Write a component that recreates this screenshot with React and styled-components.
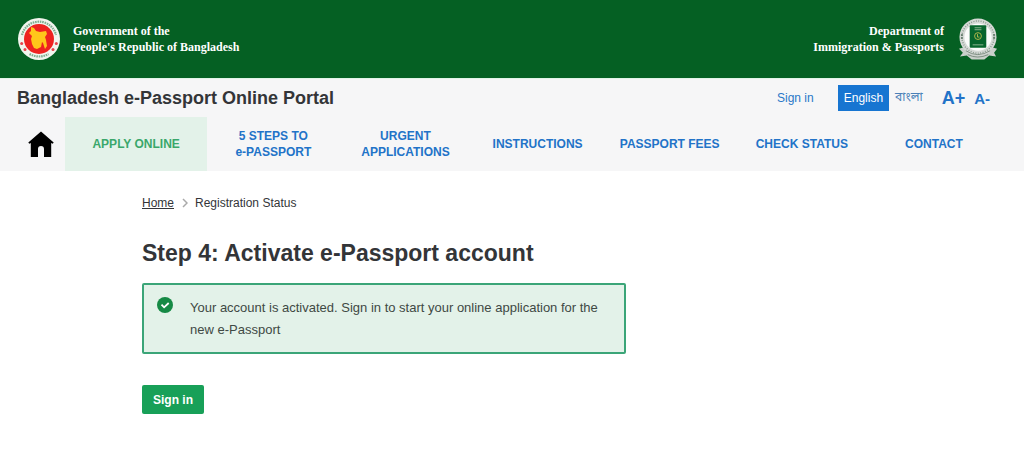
import styled, { createGlobalStyle } from 'styled-components';

const GlobalStyle = createGlobalStyle`
  *, *::before, *::after {
    box-sizing: border-box;
  }
  body {
    margin: 0;
    background: #fff;
    color: #333538;
    font-family: 'Liberation Sans', Arial, sans-serif;
    font-size: 12px;
  }
  h1, h2, p, ol {
    margin: 0;
    padding: 0;
  }
`;

const TopBar = styled.div`
  display: flex;
  justify-content: space-between;
  align-items: center;
  height: 78px;
  padding: 0 26px 0 17px;
  background: #056023;
`;

const Authority = styled.div`
  display: flex;
  align-items: center;
  gap: ${(p) => (p.$end ? '14px' : '12px')};
  color: #fff;
  font: bold 12px/16px 'Liberation Serif', 'Times New Roman', serif;
  text-align: ${(p) => (p.$end ? 'right' : 'left')};
  svg {
    display: block;
    flex: none;
  }
`;

const Header = styled.header`
  background: #f6f6f7;
`;

const PortalRow = styled.div`
  display: flex;
  justify-content: space-between;
  align-items: center;
  height: 39px;
  padding: 0 34px 0 17px;
  border-top: 1px solid #e2f5e8;
`;

const PortalTitle = styled.h1`
  font-size: 18px;
  line-height: 24px;
`;

const Tools = styled.div`
  display: flex;
  align-items: center;
`;

const SignInLink = styled.a`
  margin-right: 24px;
  color: #2a78c8;
  text-decoration: none;
`;

const Language = styled.button`
  height: 26px;
  padding: 0 6px;
  border: 0;
  background: ${(p) => (p.$active ? '#1775d1' : 'transparent')};
  color: ${(p) => (p.$active ? '#fff' : '#4a80b8')};
  font: 12px 'Liberation Sans', 'Noto Sans Bengali', 'Noto Sans', sans-serif;
`;

const FontSize = styled.button`
  margin-left: ${(p) => (p.$large ? '13px' : '9px')};
  padding: 0;
  border: 0;
  background: none;
  color: #2273c8;
  font: bold ${(p) => (p.$large ? '18px' : '15px')} 'Liberation Sans', Arial, sans-serif;
`;

const Nav = styled.nav`
  display: grid;
  grid-template-columns: 48px 14fr repeat(6, 13fr);
  height: 54px;
  padding: 0 24px 0 17px;
`;

const NavItem = styled.a`
  display: flex;
  align-items: center;
  justify-content: center;
  background: ${(p) => (p.$active ? '#e3f2e9' : 'transparent')};
  color: ${(p) => (p.$active ? '#3aa76b' : '#2273c8')};
  font-weight: bold;
  line-height: 16px;
  text-align: center;
  text-decoration: none;
  white-space: pre-line;
`;

const Main = styled.main`
  max-width: 740px;
  margin: 0 auto;
  padding: 24px 0 48px;
`;

const Breadcrumb = styled.ol`
  display: flex;
  align-items: center;
  gap: 8px;
  list-style: none;
  line-height: 16px;
  li {
    display: flex;
    align-items: center;
    gap: 7px;
  }
  a {
    color: inherit;
  }
`;

const StepTitle = styled.h2`
  margin-top: 26px;
  font-size: 23px;
  line-height: 32px;
`;

const Alert = styled.div`
  display: flex;
  align-items: flex-start;
  gap: 17px;
  max-width: 484px;
  margin-top: 14px;
  padding: 12px 24px 11px 13px;
  border: 2px solid #3ba578;
  border-radius: 2px;
  background: #e3f2e9;
  color: #404944;
  font-size: 13px;
  line-height: 22px;
  svg {
    flex: none;
  }
`;

const SignInButton = styled.button`
  height: 29px;
  margin-top: 31px;
  padding: 0 11px;
  border: 0;
  border-radius: 2px;
  background: #18a058;
  color: #fff;
  font: bold 12px 'Liberation Sans', Arial, sans-serif;
`;

function GovernmentSeal() {
  return (
    <svg width="44" height="44" viewBox="0 0 44 44" aria-hidden="true">
      <circle cx="22" cy="22" r="21" fill="#f2f5ee" />
      <path
        d="M5 18a17.500 17.500 0 0 1 34 0M12.500 37q9.500 5 19 0"
        fill="none"
        stroke="#7fae90"
        strokeWidth="2.200"
        strokeDasharray="1.600 .8"
      />
      <circle cx="22" cy="22" r="15" fill="#ee2220" />
      <g fill="#e8424a">
        <circle cx="4.700" cy="26.500" r="1.500" />
        <circle cx="8" cy="32.500" r="1.500" />
        <circle cx="36" cy="32.500" r="1.500" />
        <circle cx="39.300" cy="26.500" r="1.500" />
      </g>
      <path
        fill="#ffc61a"
        d="M14 10l3 1 2 3 4 1 6-1 1 3-2 3 1 3 1 6-2 3-2-6-1-1-1 5-4 2-3-1-2-4-1-5 1-3-3-3 2-2z"
      />
    </svg>
  );
}

function PassportSeal() {
  return (
    <svg width="40" height="44" viewBox="0 0 41 44" aria-hidden="true">
      <path fill="#c9cfca" d="M1 32l7-2 12 7 13-7 7 2-3 4 2 4-7-1-5 4H14l-5-4-7 1 3-4z" />
      <circle cx="20.500" cy="20" r="19" fill="#d5d9d6" />
      <circle cx="20.500" cy="20" r="16.500" fill="none" stroke="#8b9b90" strokeWidth="1.500" strokeDasharray="1 1.500" />
      <circle cx="20.500" cy="20" r="14" fill="#fbfcfb" />
      <path d="M8 34q12 8 25 0M10 38q10 5 21 0" fill="none" stroke="#7c8d81" />
      <rect x="12" y="8" width="17" height="23" rx="1" fill="#07652d" />
      <path d="M17 10.500h7M17 12.500h7M15 28h11" stroke="#8bb38f" />
      <circle cx="20.500" cy="19" r="3.500" fill="none" stroke="#b0b64b" />
      <path d="M20 17v3h2" fill="none" stroke="#b0b64b" />
      <path d="M3 18h2M3 21h2M36 18h2M36 21h2" stroke="#566f5e" strokeWidth="1.500" />
    </svg>
  );
}

function HomeIcon() {
  return (
    <svg width="26" height="26" viewBox="0 0 26 26" aria-hidden="true">
      <path d="M13 .5L.3 11.600l1 1.200 1.500-.8v14H10v-8q0-3 3-3t3 3v8h7.200V12l1.500.8 1-1.200z" />
    </svg>
  );
}

function CheckIcon() {
  return (
    <svg width="16" height="16" viewBox="0 0 16 16" aria-hidden="true">
      <circle cx="8" cy="8" r="8" fill="#168a45" />
      <path d="M4.500 7.700l2.600 2.600 4.600-4.300" fill="none" stroke="#fff" strokeWidth="1.800" />
    </svg>
  );
}

const links = [
  'APPLY ONLINE',
  '5 STEPS TO\ne-PASSPORT',
  'URGENT\nAPPLICATIONS',
  'INSTRUCTIONS',
  'PASSPORT FEES',
  'CHECK STATUS',
  'CONTACT',
];

export default function App() {
  return (
    <>
      <GlobalStyle />
      <TopBar>
        <Authority>
          <GovernmentSeal />
          <p>
            Government of the
            <br />
            People's Republic of Bangladesh
          </p>
        </Authority>
        <Authority $end>
          <p>
            Department of
            <br />
            Immigration &amp; Passports
          </p>
          <PassportSeal />
        </Authority>
      </TopBar>
      <Header>
        <PortalRow>
          <PortalTitle>Bangladesh e-Passport Online Portal</PortalTitle>
          <Tools>
            <SignInLink href="#signin">Sign in</SignInLink>
            <Language type="button" $active>
              English
            </Language>
            <Language type="button" lang="bn">
              বাংলা
            </Language>
            <FontSize type="button" $large>
              A+
            </FontSize>
            <FontSize type="button">A-</FontSize>
          </Tools>
        </PortalRow>
        <Nav>
          <NavItem href="#home" aria-label="Home">
            <HomeIcon />
          </NavItem>
          {links.map((label, i) => (
            <NavItem key={label} href="#" $active={i === 0}>
              {label}
            </NavItem>
          ))}
        </Nav>
      </Header>
      <Main>
        <Breadcrumb>
          <li>
            <a href="#home">Home</a>
          </li>
          <li>
            <svg width="6" height="10" viewBox="0 0 6 10" aria-hidden="true">
              <path d="M1 1l4 4-4 4" fill="none" stroke="#aaa" strokeWidth="1.500" />
            </svg>
            Registration Status
          </li>
        </Breadcrumb>
        <StepTitle>Step 4: Activate e-Passport account</StepTitle>
        <Alert role="status">
          <CheckIcon />
          <p>Your account is activated. Sign in to start your online application for the new e-Passport</p>
        </Alert>
        <SignInButton type="button">Sign in</SignInButton>
      </Main>
    </>
  );
}
